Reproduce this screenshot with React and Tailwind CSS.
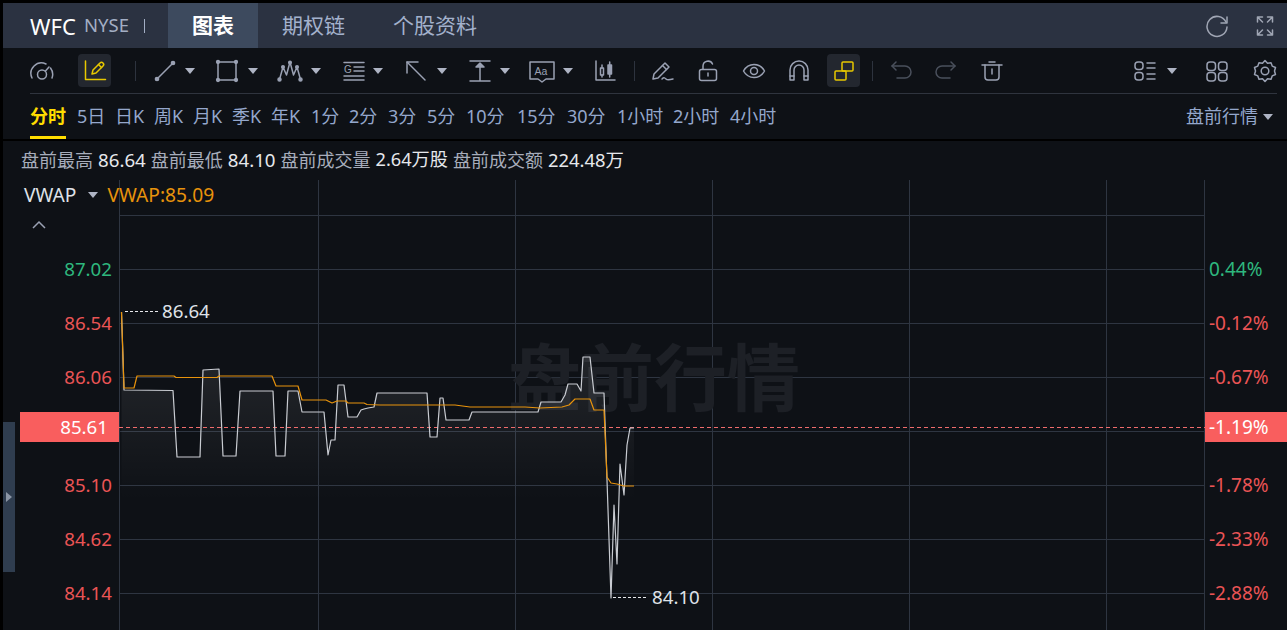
import React from "react";

const CJK = '"Noto Sans", "Noto Sans CJK SC", sans-serif';

const whiteLine =
  "121.5,312 124,390 173,390.5 177,457 200,457 203,370 219,369 223,456 236,456 240,391 273,391 276,456 285,456 288,391 298,391 302,412 324,412 328,455 331,440 335,440 338,385 344,385 348,417 357,417 361,410 364,409 368,408 374,407 377,393 427,393 430,437 437,437 440,398 443,398 446,420 469,420 472,412 538,412 541,402 561,402 565,395 568,384 577,384 581,391 583,357 590,357 594,393 604,393 607,480 611,598 614,505 617,564 620,464 624,495 627,445 630,428 634,428";
const orangeLine =
  "121.5,312 124,388 134,388 137,376 174,376 176,377.5 217,377.5 219,376 272,376 276,386 298,386 302,400 326,400 332,403 337,401 346,401 348,403 364,403 367,404.5 380,405 455,405 470,407 525,407 540,408 562,407 569,405 575,399 590,399 594,410 604,410 607,477 611,483 617,484 624,486 634,486";

const tabs = ["期权链", "个股资料"];
const frames = [
  { t: "5日", w: "w-[38px]" },
  { t: "日K", w: "w-[39px]" },
  { t: "周K", w: "w-[39px]" },
  { t: "月K", w: "w-[39px]" },
  { t: "季K", w: "w-[39px]" },
  { t: "年K", w: "w-[40px]" },
  { t: "1分", w: "w-[38px]" },
  { t: "2分", w: "w-[39px]" },
  { t: "3分", w: "w-[39px]" },
  { t: "5分", w: "w-[39px]" },
  { t: "10分", w: "w-[51px]" },
  { t: "15分", w: "w-[50px]" },
  { t: "30分", w: "w-[50px]" },
  { t: "1小时", w: "w-[56px]" },
  { t: "2小时", w: "w-[57px]" },
  { t: "4小时", w: "w-[50px]" },
];
const leftPrices = [
  { v: "87.02", c: "text-[#2eb87e]" },
  { v: "86.54", c: "text-[#ea5455]" },
  { v: "86.06", c: "text-[#ea5455]" },
  { v: "", c: "" },
  { v: "85.10", c: "text-[#ea5455]" },
  { v: "84.62", c: "text-[#ea5455]" },
  { v: "84.14", c: "text-[#ea5455]" },
];
const rightPct = [
  { v: "0.44%", c: "text-[#2eb87e]" },
  { v: "-0.12%", c: "text-[#ea5455]" },
  { v: "-0.67%", c: "text-[#ea5455]" },
  { v: "", c: "" },
  { v: "-1.78%", c: "text-[#ea5455]" },
  { v: "-2.33%", c: "text-[#ea5455]" },
  { v: "-2.88%", c: "text-[#ea5455]" },
];

const Caret = ({ className = "" }) => (
  <svg width="12" height="8" viewBox="0 0 12 8" className={`shrink-0 ${className}`}>
    <path d="M1 1h10L6 7z" fill="#aeb4c4" />
  </svg>
);

const Ico = ({ w = 24, color = "#9aa1b3", children, className = "" }) => (
  <svg width={w} height="24" viewBox={`0 0 ${w} 24`} fill="none" stroke={color} strokeWidth="1.5" strokeLinecap="round" strokeLinejoin="round" className={`shrink-0 ${className}`}>
    {children}
  </svg>
);

const Divider = ({ className = "" }) => <div className={`w-px h-[20px] bg-[#2d333e] shrink-0 ${className}`} />;

const Toolbar = () => (
  <div className="flex items-center h-[46px] ml-[27px] mr-[10px] border-b border-[#2f343e] shrink-0">
    <Ico>
      <path d="M2 19a10.500 10.500 0 0 1 14-14" />
      <path d="M20.500 9a10.500 10.500 0 0 1 1.500 10" />
      <circle cx="12" cy="15.500" r="4.500" />
      <path d="M15.500 12l3.500-4" />
    </Ico>
    <div className="ml-[24px] w-[33px] h-[33px] rounded bg-[#23272f] flex items-center justify-center shrink-0">
      <Ico color="#e8c800">
        <path d="M2.500 2v18.500h20" />
        <path d="M9 15l1-4 7-7a2 2 0 0 1 3 3l-7 7z" />
        <path d="M15.500 5.500l3 3" />
      </Ico>
    </div>
    <Divider className="ml-[24px]" />

    <Ico className="ml-[17px]">
      <circle cx="4" cy="20" r="1.600" fill="#9aa1b3" />
      <circle cx="20" cy="4" r="1.600" fill="#9aa1b3" />
      <path d="M5 19L19 5" />
    </Ico>
    <Caret className="ml-[7px]" />
    <Ico className="ml-[19px]">
      <rect x="3" y="3" width="18" height="18" />
      <g fill="#9aa1b3">
        <circle cx="3" cy="3" r="1.400" />
        <circle cx="21" cy="3" r="1.400" />
        <circle cx="3" cy="21" r="1.400" />
        <circle cx="21" cy="21" r="1.400" />
      </g>
    </Ico>
    <Caret className="ml-[8px]" />
    <Ico className="ml-[18px]" w={26}>
      <path d="M2.500 20.500L6 8l3.500 8L13 3l3.500 13L20 8l3.500 12.500" />
      <g fill="#9aa1b3">
        <circle cx="2.500" cy="20.500" r="1.500" />
        <circle cx="6" cy="8" r="1.300" />
        <circle cx="13" cy="3.500" r="1.300" />
        <circle cx="20" cy="8" r="1.300" />
        <circle cx="23.500" cy="20.500" r="1.500" />
      </g>
    </Ico>
    <Caret className="ml-[7px]" />
    <Ico className="ml-[20px]">
      <path d="M2 3.500h20M12 8h10M12 12h10M2 17h20M2 21h20" />
      <text x="2" y="14" fontFamily="Liberation Sans" fontSize="10" fill="#9aa1b3" stroke="none">G</text>
    </Ico>
    <Caret className="ml-[6px]" />
    <Ico className="ml-[21px]" w={22}>
      <path d="M2 3l18 18" />
      <path d="M2 14V3h11" />
    </Ico>
    <Caret className="ml-[9px]" />
    <Ico className="ml-[19px]">
      <path d="M3 2h20M3 22h20M13 6v16" />
      <path d="M9 8l4-4 4 4z" fill="#9aa1b3" />
    </Ico>
    <Caret className="ml-[8px]" />
    <Ico className="ml-[18px]" w={26}>
      <path d="M1 3h24v17h-8l-4 3-4-3H1z" />
      <text x="5.500" y="15.500" fontFamily="Liberation Sans" fontSize="10.500" fill="#9aa1b3" stroke="none">Aa</text>
    </Ico>
    <Caret className="ml-[7px]" />
    <Ico className="ml-[19px]">
      <path d="M3 2v19h19" />
      <rect x="7.500" y="9" width="3" height="7" />
      <path d="M9 6v3M9 16v2" />
      <rect x="15" y="6" width="3.500" height="9" fill="#9aa1b3" />
      <path d="M16.700 3v3M16.700 15v3" />
    </Ico>
    <Divider className="ml-[17px]" />
    <Ico className="ml-[16px]">
      <path d="M2 20l1-5L14 4l4 4L7 19z" />
      <path d="M11.500 6.500l4 4" />
      <path d="M11 20c2-2 3-1 4 0s3 1 7 0" />
    </Ico>
    <Ico className="ml-[21px]">
      <rect x="3.500" y="10.500" width="17" height="11" rx="2" />
      <path d="M7 10V7a5 5 0 0 1 9.500-2" />
      <path d="M12 14v3" />
    </Ico>
    <Ico className="ml-[22px]">
      <path d="M1.500 12C4 7.500 8 5.500 12 5.500s8 2 10.500 6.500C20 16.500 16 18.500 12 18.500S4 16.500 1.500 12z" />
      <circle cx="12" cy="12" r="3.500" />
    </Ico>
    <Ico className="ml-[21px]">
      <path d="M3 21V11a9 9 0 0 1 18 0v10h-4V11a5 5 0 0 0-10 0v10z" />
      <path d="M3 17h4M17 17h4" />
    </Ico>
    <div className="ml-[16px] w-[33px] h-[33px] rounded bg-[#23272f] flex items-center justify-center shrink-0">
      <Ico color="#e8c800">
        <rect x="10" y="3" width="11" height="9" rx="1" />
        <rect x="3" y="12" width="11" height="9" rx="1" />
      </Ico>
    </div>
    <Divider className="ml-[12px]" />
    <Ico className="ml-[16px]" color="#4a505c">
      <path d="M7 3L3 7l4 4" />
      <path d="M3 7h13a5.500 5.500 0 0 1 0 12H8" />
    </Ico>
    <Ico className="ml-[21px]" color="#4a505c">
      <path d="M17 3l4 4-4 4" />
      <path d="M21 7H8a5.500 5.500 0 0 0 0 12h8" />
    </Ico>
    <Ico className="ml-[22px]">
      <path d="M2 6h20M9 3h6" />
      <path d="M5 6v12a3 3 0 0 0 3 3h8a3 3 0 0 0 3-3V6" />
      <path d="M12 10v5" />
    </Ico>
    <div className="flex-1" />
    <Ico>
      <rect x="2" y="3" width="8" height="7.500" rx="3" />
      <rect x="2" y="13.500" width="8" height="7.500" rx="3" />
      <path d="M14 4h8M14 9h8M14 15h8M14 20h8" />
    </Ico>
    <Caret className="ml-[9px]" />
    <Ico className="ml-[27px]">
      <rect x="2" y="3" width="8.500" height="8.500" rx="3" />
      <rect x="13.500" y="3" width="8.500" height="8.500" rx="3" />
      <rect x="2" y="13.500" width="8.500" height="8.500" rx="3" />
      <rect x="13.500" y="13.500" width="8.500" height="8.500" rx="3" />
    </Ico>
    <Ico className="ml-[24px]">
      <path d="M12 1.500l2.500 2.800 3.500-.6 1.200 3.400 3.300 1.400-1 3.500 1 3.500-3.300 1.400-1.200 3.400-3.500-.6L12 22.500l-2.500-2.800-3.500.6-1.200-3.400-3.300-1.400 1-3.500-1-3.500 3.300-1.400L6 3.700l3.500.6z" />
      <circle cx="12" cy="12" r="3.800" />
    </Ico>
  </div>
);

const Chart = () => (
  <div className="flex-1 relative min-w-0">
    <svg width="1086" height="450" viewBox="119 180 1086 450" className="absolute left-0 top-0 block">
      <defs>
        <linearGradient id="area" gradientUnits="userSpaceOnUse" x1="0" y1="370" x2="0" y2="500">
          <stop offset="0" stopColor="#ffffff" stopOpacity="0.08" />
          <stop offset="1" stopColor="#ffffff" stopOpacity="0" />
        </linearGradient>
      </defs>
      <g stroke="#2e3541" strokeWidth="1">
        {[179.5, 215.5, 269.5, 323.5, 377.5, 431.5, 485.5, 539.5, 593.5].map((y) => (
          <line key={y} x1="119" x2="1205" y1={y} y2={y} />
        ))}
        {[119.5, 318.5, 515.5, 712.5, 909.5, 1106.5, 1204.5].map((x) => (
          <line key={x} x1={x} x2={x} y1="180" y2="630" />
        ))}
      </g>
      <text x="508" y="405" fontFamily='"Noto Sans CJK SC", sans-serif' fontSize="73" fontWeight="700" fill="#1d2026">盘前行情</text>
      <polygon points={`${whiteLine} 634,630 121.5,630`} fill="url(#area)" />
      <line x1="119" x2="1205" y1="427.5" y2="427.5" stroke="#ef6c6c" strokeWidth="1" strokeDasharray="4 3" />
      <polyline points={whiteLine} fill="none" stroke="#c9ccd2" strokeWidth="1.200" strokeLinejoin="round" />
      <polyline points={orangeLine} fill="none" stroke="#e8930c" strokeWidth="1.200" strokeLinejoin="round" />
      <line x1="125" x2="158" y1="311.500" y2="311.500" stroke="#e6e8ec" strokeDasharray="3 2" />
      <line x1="613" x2="647" y1="597.500" y2="597.500" stroke="#e6e8ec" strokeDasharray="3 2" />
    </svg>
    <span className="absolute left-[43px] top-[119px] text-[18.7px] leading-6 text-[#dfe2e8]">86.64</span>
    <span className="absolute left-[533px] top-[405px] text-[18.7px] leading-6 text-[#dfe2e8]">84.10</span>
  </div>
);

export default function App() {
  return (
    <div className="w-[1287px] h-[630px] overflow-hidden bg-black pl-[3px] pt-[3px]" style={{ fontFamily: CJK }}>
      <div className="h-[627px] bg-[#0e1116] flex flex-col">
        {/* top tabs */}
        <div className="h-[45px] bg-[#2b3241] flex items-center shrink-0">
          <span className="ml-[27px] w-[47px] text-[22px] text-white leading-none">WFC</span>
          <span className="ml-[7px] w-[45px] text-[18.5px] text-[#a3aec4] leading-none">NYSE</span>
          <div className="ml-[15px] w-px h-[14px] bg-[#a3aec4]" />
          <div className="ml-[23px] w-[90px] h-full bg-[#3d4a5e] flex items-center justify-center text-[21px] font-bold text-white">图表</div>
          {tabs.map((t, i) => (
            <span key={t} className={`text-[21px] text-[#a3b1cc] ${i === 0 ? "ml-[24px]" : "ml-[48px]"}`}>{t}</span>
          ))}
          <div className="flex-1" />
          <Ico color="#a0a6b4" className="mr-[27px]">
            <path d="M21 8a10 10 0 1 0 1 5" />
            <path d="M22 3v6h-6" />
          </Ico>
          <Ico w={18} color="#a0a6b4" className="mr-[13px]">
            <path d="M1.500 8V3h5M1.500 3l5 5M16.500 8V3h-5M16.500 3l-5 5M1.500 16v5h5M1.500 21l5-5M16.500 16v5h-5M16.500 21l-5-5" />
          </Ico>
        </div>

        <Toolbar />

        {/* time frames */}
        <div className="h-[45px] flex items-center pl-[27px] pr-[13px] shrink-0">
          <div className="relative h-full flex items-center">
            <span className="text-[18px] font-bold text-[#ffdd00]">分时</span>
            <div className="absolute left-0 right-0 bottom-0 h-[3px] bg-[#ffdd00]" />
          </div>
          <div className="flex items-center ml-[11px] text-[18px] text-[#94a7cc]">
            {frames.map((f) => (
              <span key={f.t} className={`${f.w} whitespace-nowrap`}>{f.t}</span>
            ))}
          </div>
          <div className="flex-1" />
          <span className="text-[18px] text-[#94a7cc]">盘前行情</span>
          <Caret className="ml-[4px]" />
        </div>
        <div className="h-[2px] bg-black shrink-0" />

        {/* pre-market stats */}
        <div className="h-[39px] flex items-center pl-[18px] pb-[1px] gap-[5px] text-[18px] shrink-0">
          <span className="text-[#a7adbb]">盘前最高</span>
          <span className="text-[18.7px] text-[#e6e8ec]">86.64</span>
          <span className="text-[#a7adbb]">盘前最低</span>
          <span className="text-[18.7px] text-[#e6e8ec]">84.10</span>
          <span className="text-[#a7adbb]">盘前成交量</span>
          <span className="text-[18.2px] text-[#e6e8ec]">2.64万股</span>
          <span className="text-[#a7adbb]">盘前成交额</span>
          <span className="text-[18.4px] text-[#e6e8ec]">224.48万</span>
        </div>

        {/* chart */}
        <div className="flex-1 flex relative overflow-hidden">
          <div className="w-[116px] shrink-0 pt-[62px]">
            {leftPrices.map((p, i) => (
              <div key={i} className={`h-[54px] flex items-center justify-end pr-[7px] text-[18.7px] ${p.c}`}>{p.v}</div>
            ))}
          </div>
          <Chart />
          <div className="w-[82px] shrink-0 pt-[62px]">
            {rightPct.map((p, i) => (
              <div key={i} className={`h-[54px] flex items-center pl-[4px] text-[19px] ${p.c}`}>{p.v}</div>
            ))}
          </div>

          {/* legend, price tags and side handle sit over the chart */}
          <div className="absolute left-[21px] top-[1px] flex items-center text-[19.2px]">
            <span className="text-[#dfe2e8]">VWAP</span>
            <Caret className="ml-[11px]" />
            <span className="ml-[8px] text-[#e8930c]">VWAP:85.09</span>
          </div>
          <svg width="14" height="10" viewBox="0 0 14 10" className="absolute left-[29px] top-[40px]">
            <path d="M1 8l6-6 6 6" fill="none" stroke="#9aa1b3" strokeWidth="1.500" />
          </svg>
          <div className="absolute left-[17px] top-[232px] w-[99px] h-[30px] bg-[#f95e5e] flex items-center justify-end pr-[11px] text-[18.7px] text-white">85.61</div>
          <div className="absolute left-[1202px] top-[232px] w-[82px] h-[30px] bg-[#f95e5e] flex items-center pl-[4px] text-[19px] text-white">-1.19%</div>
          <div className="absolute left-0 top-[242px] w-[12px] h-[150px] bg-[#2f3d4f] flex items-center justify-center">
            <svg width="6" height="10" viewBox="0 0 6 10"><path d="M0 0l6 5-6 5z" fill="#8b95a5" /></svg>
          </div>
        </div>
      </div>
    </div>
  );
}
